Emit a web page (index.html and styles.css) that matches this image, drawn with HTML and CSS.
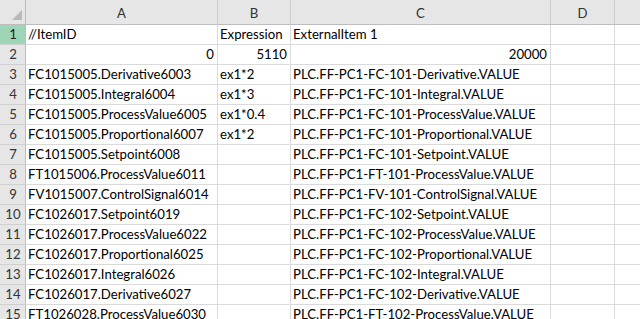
FILE: index.html
```html
<!DOCTYPE html>
<html>
<head>
<meta charset="utf-8">
<link rel="stylesheet" href="styles.css">
</head>
<body>
<div class="sheet">
  <div class="corner"><span class="tri"></span></div>
  <div class="colhead">A</div>
  <div class="colhead">B</div>
  <div class="colhead">C</div>
  <div class="colhead">D</div>
  <div class="colhead last"></div>

  <div class="rowhead sel">1</div>
  <div class="cell">//ItemID</div>
  <div class="cell">Expression</div>
  <div class="cell">ExternalItem 1</div>
  <div class="cell"></div><div class="cell"></div>

  <div class="rowhead">2</div>
  <div class="cell num">0</div>
  <div class="cell num">5110</div>
  <div class="cell num">20000</div>
  <div class="cell"></div><div class="cell"></div>

  <div class="rowhead">3</div>
  <div class="cell">FC1015005.Derivative6003</div>
  <div class="cell">ex1*2</div>
  <div class="cell">PLC.FF-PC1-FC-101-Derivative.VALUE</div>
  <div class="cell"></div><div class="cell"></div>

  <div class="rowhead">4</div>
  <div class="cell">FC1015005.Integral6004</div>
  <div class="cell">ex1*3</div>
  <div class="cell">PLC.FF-PC1-FC-101-Integral.VALUE</div>
  <div class="cell"></div><div class="cell"></div>

  <div class="rowhead">5</div>
  <div class="cell">FC1015005.ProcessValue6005</div>
  <div class="cell">ex1*0.4</div>
  <div class="cell">PLC.FF-PC1-FC-101-ProcessValue.VALUE</div>
  <div class="cell"></div><div class="cell"></div>

  <div class="rowhead">6</div>
  <div class="cell">FC1015005.Proportional6007</div>
  <div class="cell">ex1*2</div>
  <div class="cell">PLC.FF-PC1-FC-101-Proportional.VALUE</div>
  <div class="cell"></div><div class="cell"></div>

  <div class="rowhead">7</div>
  <div class="cell">FC1015005.Setpoint6008</div>
  <div class="cell"></div>
  <div class="cell">PLC.FF-PC1-FC-101-Setpoint.VALUE</div>
  <div class="cell"></div><div class="cell"></div>

  <div class="rowhead">8</div>
  <div class="cell">FT1015006.ProcessValue6011</div>
  <div class="cell"></div>
  <div class="cell">PLC.FF-PC1-FT-101-ProcessValue.VALUE</div>
  <div class="cell"></div><div class="cell"></div>

  <div class="rowhead">9</div>
  <div class="cell">FV1015007.ControlSignal6014</div>
  <div class="cell"></div>
  <div class="cell">PLC.FF-PC1-FV-101-ControlSignal.VALUE</div>
  <div class="cell"></div><div class="cell"></div>

  <div class="rowhead">10</div>
  <div class="cell">FC1026017.Setpoint6019</div>
  <div class="cell"></div>
  <div class="cell">PLC.FF-PC1-FC-102-Setpoint.VALUE</div>
  <div class="cell"></div><div class="cell"></div>

  <div class="rowhead">11</div>
  <div class="cell">FC1026017.ProcessValue6022</div>
  <div class="cell"></div>
  <div class="cell">PLC.FF-PC1-FC-102-ProcessValue.VALUE</div>
  <div class="cell"></div><div class="cell"></div>

  <div class="rowhead">12</div>
  <div class="cell">FC1026017.Proportional6025</div>
  <div class="cell"></div>
  <div class="cell">PLC.FF-PC1-FC-102-Proportional.VALUE</div>
  <div class="cell"></div><div class="cell"></div>

  <div class="rowhead">13</div>
  <div class="cell">FC1026017.Integral6026</div>
  <div class="cell"></div>
  <div class="cell">PLC.FF-PC1-FC-102-Integral.VALUE</div>
  <div class="cell"></div><div class="cell"></div>

  <div class="rowhead">14</div>
  <div class="cell">FC1026017.Derivative6027</div>
  <div class="cell"></div>
  <div class="cell">PLC.FF-PC1-FC-102-Derivative.VALUE</div>
  <div class="cell"></div><div class="cell"></div>

  <div class="rowhead">15</div>
  <div class="cell">FT1026028.ProcessValue6030</div>
  <div class="cell"></div>
  <div class="cell">PLC.FF-PC1-FT-102-ProcessValue.VALUE</div>
  <div class="cell"></div><div class="cell"></div>
</div>
</body>
</html>
```
FILE: styles.css
```css
html, body {
  margin: 0;
  padding: 0;
  background: #ffffff;
  overflow: hidden;
}
body {
  width: 640px;
  height: 319px;
  font-family: Lato, "Liberation Sans", sans-serif;
  font-size: 13.2px;
  color: #000;
}
.sheet {
  display: grid;
  grid-template-columns: 26px 192px 73px 260px 64px 40px;
  grid-template-rows: 25px repeat(15, 20px);
}
.corner {
  background: #e6e6e6;
  border-right: 1px solid #bdbdbd;
  border-bottom: 1px solid #bdbdbd;
  position: relative;
}
.tri {
  position: absolute;
  right: 3px;
  bottom: 4px;
  width: 0;
  height: 0;
  border-left: 10px solid transparent;
  border-bottom: 10px solid #b9b9b9;
}
.colhead {
  background: #e6e6e6;
  border-right: 1px solid #cfcfcf;
  border-bottom: 1px solid #bdbdbd;
  display: flex;
  align-items: center;
  justify-content: center;
  color: #333;
  padding-top: 1px;
}
.rowhead {
  background: #e6e6e6;
  border-right: 1px solid #bdbdbd;
  border-bottom: 1px solid #d0d0d0;
  display: flex;
  align-items: flex-end;
  justify-content: center;
  color: #333;
  padding-left: 1px;
  padding-bottom: 1px;
  line-height: 17px;
}
.rowhead.sel {
  background: #9fd5b7;
  color: #222;
}
.cell {
  border-right: 1px solid #dadada;
  border-bottom: 1px solid #dadada;
  white-space: nowrap;
  padding: 0 3px 1px 2px;
  line-height: 17px;
  display: flex;
  align-items: flex-end;
  overflow: visible;
  min-width: 0;
}
.cell.num {
  justify-content: flex-end;
}
```
